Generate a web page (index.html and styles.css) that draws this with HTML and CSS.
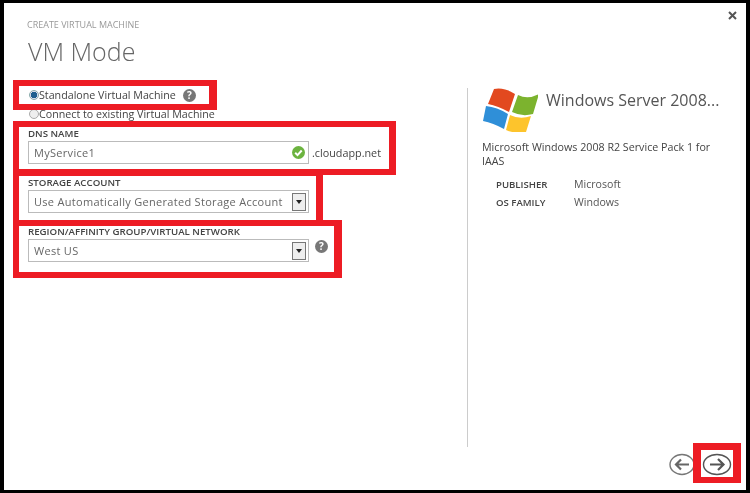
FILE: index.html
```html
<!DOCTYPE html>
<html lang="en">
<head>
  <meta charset="UTF-8">
  <title>Create Virtual Machine</title>
  <link rel="stylesheet" href="styles.css">
</head>
<body>

  <div class="dialog">
    <div class="main">
      <div class="step">CREATE VIRTUAL MACHINE</div>
      <h1 class="title">VM Mode</h1>

      <div class="radio-row first">
        <span class="radio checked"></span>
        <span>Standalone Virtual Machine</span>
        <span class="help small">?</span>
      </div>
      <div class="radio-row">
        <span class="radio"></span>
        <span>Connect to existing Virtual Machine</span>
      </div>

      <div class="label dns-label">DNS NAME</div>
      <div class="field-row">
        <div class="field">
          <span>MyService1</span>
          <svg class="ok" width="13" height="13" viewBox="0 0 13 13">
            <circle cx="6.5" cy="6.5" r="6.5" fill="#6cb33f"/>
            <path d="M3.2 6.8l2.3 2.3 4.2-4.6" fill="none" stroke="#fff" stroke-width="2"/>
          </svg>
        </div>
        <span class="suffix">.cloudapp.net</span>
      </div>

      <div class="label storage-label">STORAGE ACCOUNT</div>
      <div class="field-row">
        <div class="field">
          <span>Use Automatically Generated Storage Account</span>
          <span class="drop"></span>
        </div>
      </div>

      <div class="label region-label">REGION/AFFINITY GROUP/VIRTUAL NETWORK</div>
      <div class="field-row">
        <div class="field">
          <span>West US</span>
          <span class="drop"></span>
        </div>
        <span class="help region-help">?</span>
      </div>
    </div>

    <div class="side">
      <div class="os-head">
        <svg class="logo" width="56" height="44" viewBox="6 9 56 44">
          <path d="M18 10Q28 8 39 15L33 33Q22 27 12 25Z" fill="#e2491f"/>
          <path d="M42 16Q52 21 63 15L57 35Q46 38 36 33Z" fill="#7cb32e"/>
          <path d="M10 27Q21 28 32 35L28 50Q17 44 7 42Z" fill="#2f8fd8"/>
          <path d="M34 36Q44 41 55 37L50 53Q39 55 30 51Z" fill="#fdc42c"/>
        </svg>
        <div class="os-name">Windows Server 2008...</div>
      </div>
      <p class="desc">Microsoft Windows 2008 R2 Service Pack 1 for IAAS</p>
      <div class="meta">
        <div class="meta-key">PUBLISHER</div><div>Microsoft</div>
        <div class="meta-key">OS FAMILY</div><div>Windows</div>
      </div>
    </div>

    <svg class="close" width="9" height="9" viewBox="0 0 9 9">
      <path d="M1 1l7 7M8 1l-7 7" stroke="#555" stroke-width="2"/>
    </svg>

    <div class="nav">
      <svg class="nav-back" width="26" height="23" viewBox="0 0 26 23">
        <ellipse cx="13" cy="11.5" rx="12" ry="10" fill="#fff" stroke="#777" stroke-width="1.4"/>
        <path d="M20 11.5H7M12 6.5l-5 5 5 5" fill="none" stroke="#666" stroke-width="2.2"/>
      </svg>
      <svg class="nav-next" width="30" height="23" viewBox="0 0 30 23">
        <ellipse cx="15" cy="11.5" rx="13.5" ry="10" fill="#fff" stroke="#555" stroke-width="1.4"/>
        <path d="M8 11.5H21.5M16 6l5.5 5.5-5.5 5.5" fill="none" stroke="#555" stroke-width="2.2"/>
      </svg>
    </div>
  </div>

  <!-- red callouts drawn on top of the screenshot -->
  <div class="mark mark-radio"></div>
  <div class="mark mark-dns"></div>
  <div class="mark mark-storage"></div>
  <div class="mark mark-region"></div>
  <div class="mark mark-next"></div>

</body>
</html>
```

FILE: styles.css
```css
body {
  margin: 0;
  width: 750px;
  height: 493px;
  overflow: hidden;
  background: #000;
  font-family: "Open Sans", "Noto Sans", sans-serif;
  color: #444;
}

.dialog {
  position: relative;
  display: flex;
  height: 487px;
  margin: 3px 4px 3px;
  background: #fff;
  filter: blur(0.35px);
}

/* left column */
.main {
  width: 440px;
  padding: 0 0 0 23px;
  flex-shrink: 0;
}

.step {
  margin-top: 15px;
  font-size: 9px;
  line-height: 13px;
  color: #999;
}

.title {
  margin: 5px 0 0 1px;
  font-size: 25px;
  line-height: 30px;
  font-weight: 300;
  color: #666;
}

.radio-row {
  display: flex;
  align-items: center;
  height: 14px;
  margin: 5px 0 0 1px;
  font-size: 10.7px;
  color: #444;
}

.radio-row.first {
  margin-top: 22px;
}

.radio {
  width: 10px;
  height: 10px;
  margin-left: 1px;
  box-sizing: border-box;
  border: 1px solid #aaa;
  border-radius: 50%;
  background: #eee;
}

.radio.checked {
  border-color: #8aa;
  background: radial-gradient(circle, #1f5f8f 0 3px, #dde 3.5px);
}

.help {
  display: inline-block;
  width: 13px;
  height: 13px;
  border-radius: 50%;
  background: #777;
  color: #fff;
  font-size: 10px;
  font-weight: 700;
  line-height: 13px;
  text-align: center;
}

.help.small {
  margin-left: 7px;
}

.region-help {
  margin: 0 0 8px 6px;
}

.label {
  margin-left: 1px;
  font-size: 9.7px;
  line-height: 12px;
  font-weight: 600;
  color: #444;
}

.dns-label {
  margin-top: 7px;
}

.storage-label {
  margin-top: 13px;
}

.region-label {
  margin-top: 13px;
}

.field-row {
  display: flex;
  align-items: center;
  margin: 1px 0 0 1px;
}

.field {
  display: flex;
  align-items: center;
  justify-content: space-between;
  width: 281px;
  height: 23px;
  padding: 0 2px 0 5px;
  box-sizing: border-box;
  border: 1px solid #bbb;
  font-size: 11px;
  letter-spacing: 0.3px;
  color: #666;
}

.ok {
  margin-right: 1px;
}

.suffix {
  margin-left: 3px;
  font-size: 10.8px;
  color: #444;
}

.drop {
  position: relative;
  width: 14px;
  height: 18px;
  box-sizing: border-box;
  border: 1px solid #777;
  background: #eee;
}

.drop::after {
  content: "";
  position: absolute;
  left: 3px;
  top: 6px;
  border: 3px solid transparent;
  border-top: 4px solid #222;
}

/* right column */
.side {
  margin-top: 85px;
  height: 359px;
  padding-left: 14px;
  border-left: 1px solid #ccc;
  width: 240px;
}

.os-head {
  display: flex;
  align-items: center;
  height: 44px;
}

.logo {
  flex-shrink: 0;
}

.os-name {
  margin: 0 0 20px 8px;
  font-size: 16px;
  color: #555;
  white-space: nowrap;
}

.desc {
  margin: 8px 0 0;
  width: 235px;
  font-size: 10.7px;
  line-height: 14px;
  color: #444;
}

.meta {
  display: grid;
  grid-template-columns: 78px auto;
  row-gap: 5px;
  margin: 10px 0 0 14px;
  font-size: 10.6px;
  line-height: 13px;
  color: #555;
}

.meta-key {
  font-size: 9.6px;
  font-weight: 600;
  color: #444;
}

.close {
  position: absolute;
  top: 8px;
  right: 9px;
}

.nav {
  position: absolute;
  right: 14px;
  bottom: 14px;
  display: flex;
  align-items: center;
  gap: 7px;
}

/* callouts */
.mark {
  position: absolute;
  box-sizing: border-box;
  border: 6px solid #ed1c24;
}

.mark-radio {
  left: 13px;
  top: 80px;
  width: 204px;
  height: 30px;
  border-right-width: 8px;
}

.mark-dns {
  left: 13px;
  top: 121px;
  width: 383px;
  height: 54px;
  border-right-width: 7px;
}

.mark-storage {
  left: 13px;
  top: 170px;
  width: 310px;
  height: 56px;
  border-right-width: 7px;
}

.mark-region {
  left: 13px;
  top: 220px;
  width: 329px;
  height: 58px;
  border-right-width: 8px;
}

.mark-next {
  left: 693px;
  top: 443px;
  width: 48px;
  height: 40px;
  border-width: 7px 8px 6px;
}
```
